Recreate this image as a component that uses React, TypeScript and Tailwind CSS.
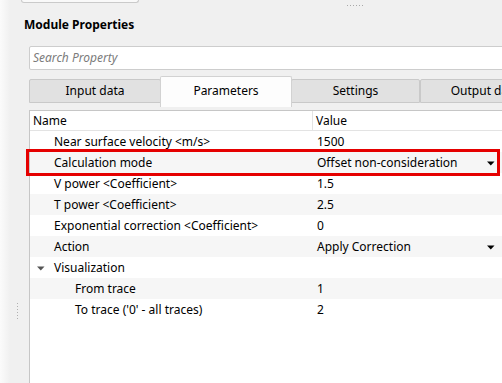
import type { ReactNode } from 'react'

type Row = {
  name: string
  value?: string
  depth: number
  dropdown?: boolean
  group?: boolean
  marked?: boolean
}

const rows: Row[] = [
  { name: 'Near surface velocity <m/s>', value: '1500', depth: 1 },
  { name: 'Calculation mode', value: 'Offset non-consideration', depth: 1, dropdown: true, marked: true },
  { name: 'V power <Coefficient>', value: '1.5', depth: 1 },
  { name: 'T power <Coefficient>', value: '2.5', depth: 1 },
  { name: 'Exponential correction <Coefficient>', value: '0', depth: 1 },
  { name: 'Action', value: 'Apply Correction', depth: 1, dropdown: true },
  { name: 'Visualization', depth: 1, group: true },
  { name: 'From trace', value: '1', depth: 2 },
  { name: "To trace ('0' - all traces)", value: '2', depth: 2 },
]

function Caret({ className = '' }: { className?: string }) {
  return (
    <svg width="8" height="5" viewBox="0 0 8 5" className={className}>
      <path d="M0 0.5h7.5L3.75 4.5z" fill="currentColor" />
    </svg>
  )
}

function Tab({ label, active, width }: { label: string; active?: boolean; width: string }): ReactNode {
  if (active) {
    return (
      <div className={`${width} h-[31px] -mx-px z-10 shrink-0 flex justify-center pt-[6px] bg-[#fdfdfd] border border-b-0 border-[#d2d2d2] rounded-t-[2px]`}>
        {label}
      </div>
    )
  }
  return (
    <div className={`${width} mt-[3px] h-[24px] shrink-0 flex items-center justify-center bg-[#e1e1e1] border border-[#c9c9c9] rounded-t-[2px]`}>
      {label}
    </div>
  )
}

export default function App() {
  return (
    <div className="relative w-[502px] h-[383px] overflow-hidden bg-[linear-gradient(to_right,#fbfbfb,#f0f0f0_10px)] text-[12px] leading-[16px] text-black font-['Segoe_UI','Noto_Sans',sans-serif]">
      {/* grips */}
      <div className="absolute left-[347px] top-[5px] flex gap-[2px]">
        {Array.from({ length: 6 }).map((_, i) => (
          <span key={i} className="w-px h-px bg-[#a8a8a8]" />
        ))}
      </div>
      <div className="absolute left-[17px] top-[303px] flex flex-col gap-[2px]">
        {Array.from({ length: 6 }).map((_, i) => (
          <span key={i} className="w-px h-px bg-[#b0b0b0]" />
        ))}
      </div>

      <div className="ml-[21px] w-[118px] h-[3px] bg-[#f9f9f9] border-x border-b border-[#cacaca] rounded-b-[3px]" />

      <div className="ml-[24px] mt-[14px] font-bold">Module Properties</div>

      <div className="ml-[29px] mt-[13px] flex flex-col">
        <div className="h-[24px] -mr-4 bg-white border border-[#cdcdcd] rounded-[2px] flex items-center pl-[3px] italic text-[#7b7b7b]">
          Search Property
        </div>

        <div className="mt-[6px] h-[31px] flex items-start whitespace-nowrap">
          <Tab label="Input data" width="w-[132px]" />
          <Tab label="Parameters" width="w-[132px]" active />
          <Tab label="Settings" width="w-[129px]" />
          <Tab label="Output data" width="w-[130px]" />
        </div>

        <div className="mt-[3px] h-[280px] bg-white border-l border-t border-[#c6c6c6] flex flex-col">
          <div className="h-[20px] flex border-b border-[#e3e3e3]">
            <div className="w-[283px] pl-[3px] flex items-center border-r border-[#e3e3e3]">Name</div>
            <div className="flex-1 pl-[3px] flex items-center">Value</div>
          </div>
          {rows.map((r, i) => (
            <div
              key={r.name}
              className={`relative h-[21px] flex items-center pt-px ${i % 2 === 1 ? 'bg-[#f6f6f6]' : ''}`}
            >
              <div className={`w-[284px] flex items-center ${r.depth === 2 ? 'pl-[45px]' : 'pl-[24px]'}`}>
                {r.group && <Caret className="text-[#555] -ml-[17px] mr-[9px]" />}
                {r.name}
              </div>
              <div className="flex-1 flex items-center justify-between pl-[3px] pr-[7px]">
                <span>{r.value}</span>
                {r.dropdown && <Caret className="text-black" />}
              </div>
              {r.marked && (
                <div className="absolute z-10 -left-[4px] -top-[3px] -bottom-[3px] right-[2px] border-[3px] border-[#e50000]" />
              )}
            </div>
          ))}
        </div>
      </div>
    </div>
  )
}
